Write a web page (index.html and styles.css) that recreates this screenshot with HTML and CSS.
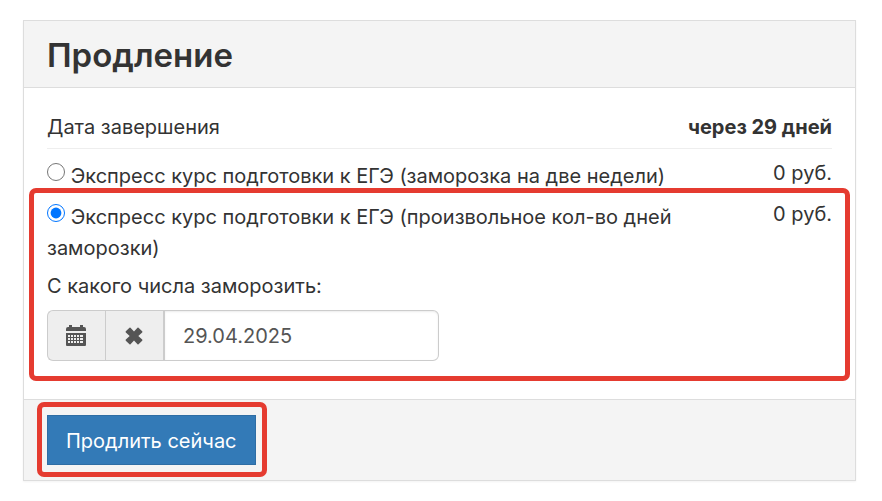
FILE: index.html
```html
<!DOCTYPE html>
<html lang="ru">
<head>
    <meta charset="UTF-8">
    <meta name="viewport" content="width=device-width, initial-scale=1.0">
    <title>Продление</title>
    <link rel="stylesheet" href="styles.css">
</head>
<body>
    <form class="panel">
        <div class="panel-heading">
            <h1>Продление</h1>
        </div>

        <div class="panel-body">
            <div class="row summary">
                <span>Дата завершения</span>
                <strong>через 29 дней</strong>
            </div>

            <div class="row option">
                <label class="option-label" for="two-weeks"><input type="radio" name="tariff" id="two-weeks"> Экспресс курс подготовки к ЕГЭ (заморозка на две недели)</label>
                <span class="price">0 руб.</span>
            </div>

            <div class="highlight highlight-option">
                <div class="row option">
                    <label class="option-label" for="any-days"><input type="radio" name="tariff" id="any-days" checked> Экспресс курс подготовки к ЕГЭ (произвольное кол-во дней заморозки)</label>
                    <span class="price">0 руб.</span>
                </div>

                <label class="date-label" for="freeze-date">С какого числа заморозить:</label>
                <div class="input-group">
                    <button type="button" class="addon" aria-label="Выбрать дату">
                        <svg width="20" height="22" viewBox="0 0 20 22" fill="#555">
                            <path d="M0 6V4Q0 2 2 2H3V0H6V2H14V0H17V2H18Q20 2 20 4V6Z"/>
                            <path fill-rule="evenodd" d="M0 8H20V20Q20 21 19 21H1Q0 21 0 20Z M2 10V12H4V10Z M5 10V12H7V10Z M8 10V12H10V10Z M11 10V12H13V10Z M14 10V12H17V10Z M2 13V15H4V13Z M5 13V15H7V13Z M8 13V15H10V13Z M11 13V15H13V13Z M14 13V15H17V13Z M2 16V18H4V16Z M5 16V18H7V16Z M8 16V18H10V16Z M11 16V18H13V16Z M14 16V18H17V16Z"/>
                        </svg>
                    </button>
                    <button type="button" class="addon" aria-label="Очистить дату">
                        <svg width="18" height="18" viewBox="0 0 18 18" fill="#555">
                            <path d="M4.500 .7Q5 .3 5.500 .7L9 4.500L12.500 .7Q13 .3 13.500 .7L17.200 4.300Q17.700 4.900 17.200 5.400L13.300 9L17.200 12.600Q17.700 13.100 17.200 13.700L13.500 17.300Q13 17.700 12.500 17.300L9 13.500L5.500 17.300Q5 17.700 4.500 17.300L.8 13.700Q.3 13.100 .8 12.600L4.700 9L.8 5.400Q.3 4.900 .8 4.300Z"/>
                        </svg>
                    </button>
                    <input type="text" class="form-control" id="freeze-date" value="29.04.2025">
                </div>
            </div>
        </div>

        <div class="panel-footer">
            <div class="highlight highlight-button">
                <button type="submit" class="btn">Продлить сейчас</button>
            </div>
        </div>
    </form>
</body>
</html>
```
FILE: styles.css
```css
* {
    box-sizing: border-box;
}

body {
    margin: 0;
    padding: 20px 26px 20px 23px;
    background: #fff;
    color: #333;
    font-family: Inter, "Noto Sans", sans-serif;
    font-size: 20px;
    font-weight: 400;
    line-height: 31px;
}

.panel {
    border: 1px solid #ddd;
    box-shadow: 0 1px 2px rgba(0, 0, 0, 0.05);
}

.panel-heading {
    padding: 14px 23px 12px;
    background: #f4f4f4;
    border-bottom: 1px solid #ddd;
}

h1 {
    margin: 0;
    font-size: 33px;
    font-weight: 600;
    line-height: 40px;
}

.panel-body {
    padding: 24px 23px 38px;
}

.row {
    display: flex;
    justify-content: space-between;
}

.summary {
    margin-bottom: 9px;
    padding-bottom: 5px;
    border-bottom: 1px solid #eee;
}

.summary strong {
    font-weight: 700;
}

.option {
    margin-bottom: 7px;
}

.option-label {
    max-width: 640px;
    padding-top: 3px;
}

.option-label input {
    width: 18px;
    height: 18px;
    margin: 0;
    vertical-align: 2px;
}

.price {
    white-space: nowrap;
}

.date-label {
    display: block;
    margin-bottom: 8px;
}

.input-group {
    display: flex;
    width: 392px;
    max-width: 100%;
    height: 51px;
}

.addon {
    display: flex;
    align-items: center;
    justify-content: center;
    width: 58px;
    padding: 0 2px 0 0;
    background: #eee;
    border: 1px solid #ccc;
    border-right: 0;
}

.addon:first-child {
    border-radius: 6px 0 0 6px;
}

.form-control {
    flex: 1;
    min-width: 0;
    padding: 2px 18px 0;
    border: 1px solid #ccc;
    border-left-width: 2px;
    border-radius: 0 6px 6px 0;
    box-shadow: inset 0 1px 2px rgba(0, 0, 0, 0.08);
    color: #555;
    font: inherit;
}

.panel-footer {
    display: flex;
    padding: 15px 23px;
    background: #f4f4f4;
    border-top: 1px solid #ddd;
}

.btn {
    display: block;
    height: 50px;
    padding: 2px 18px 0;
    background: #337ab7;
    border: 1px solid #2e6da4;
    color: #fff;
    font: inherit;
    cursor: pointer;
}

/* red frames drawn over the content */
.highlight {
    position: relative;
}

.highlight::after {
    content: "";
    position: absolute;
    border: 5px solid #e53b30;
    border-radius: 7px;
    pointer-events: none;
}

.highlight-option::after {
    inset: -11px -18px -20px;
}

.highlight-button::after {
    inset: -13px -11px -12px -10px;
}
```
